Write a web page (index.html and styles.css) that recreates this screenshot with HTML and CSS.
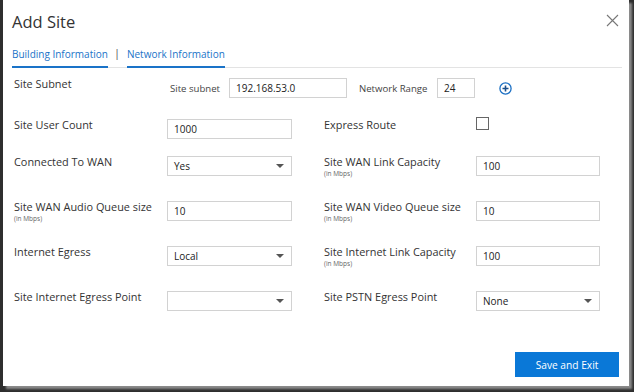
FILE: index.html
```html
<!DOCTYPE html>
<html lang="en">
<head>
    <meta charset="UTF-8">
    <title>Add Site</title>
    <link rel="stylesheet" href="styles.css">
</head>
<body>
    <div class="dialog">
        <div class="dialog-head">
            <h1>Add Site</h1>
            <span class="close">
                <svg width="13" height="13" viewBox="0 0 13 13"><path d="M1 1 L12 12 M12 1 L1 12" stroke="#777" stroke-width="1.1" fill="none"/></svg>
            </span>
        </div>

        <div class="tabs">
            <span class="tab active">Building Information</span>
            <span class="tab-sep">|</span>
            <span class="tab active">Network Information</span>
        </div>

        <div class="form">
            <div class="subnet-row">
                <div class="label">Site Subnet</div>
                <span class="small-label subnet-label">Site subnet</span>
                <input class="field subnet" type="text" value="192.168.53.0">
                <span class="small-label range-label">Network Range</span>
                <input class="field range" type="text" value="24">
                <span class="add">
                    <svg width="13" height="13" viewBox="0 0 13 13"><circle cx="6.5" cy="6.5" r="5.6" stroke="#1a6fc4" stroke-width="1.3" fill="none"/><path d="M6.5 3.5 V9.5 M3.5 6.5 H9.5" stroke="#1a4f8c" stroke-width="1.6"/></svg>
                </span>
            </div>

            <div class="row first">
                <div class="label">Site User Count</div>
                <input class="field" type="text" value="1000">
                <div class="label">Express Route</div>
                <div><span class="checkbox"></span></div>
            </div>

            <div class="row">
                <div class="label">Connected To WAN</div>
                <div class="select"><span>Yes</span><i class="arrow"></i></div>
                <div class="label">Site WAN Link Capacity<small>(in Mbps)</small></div>
                <input class="field" type="text" value="100">
            </div>

            <div class="row">
                <div class="label">Site WAN Audio Queue size<small>(in Mbps)</small></div>
                <input class="field" type="text" value="10">
                <div class="label">Site WAN Video Queue size<small>(in Mbps)</small></div>
                <input class="field" type="text" value="10">
            </div>

            <div class="row">
                <div class="label">Internet Egress</div>
                <div class="select"><span>Local</span><i class="arrow"></i></div>
                <div class="label">Site Internet Link Capacity<small>(in Mbps)</small></div>
                <input class="field" type="text" value="100">
            </div>

            <div class="row">
                <div class="label">Site Internet Egress Point</div>
                <div class="select"><span></span><i class="arrow"></i></div>
                <div class="label">Site PSTN Egress Point</div>
                <div class="select"><span>None</span><i class="arrow"></i></div>
            </div>
        </div>

        <div class="footer">
            <button class="save">Save and Exit</button>
        </div>
    </div>
</body>
</html>
```

FILE: styles.css
```css
body {
    margin: 0;
    font-family: "Open Sans", "Noto Sans", Arial, sans-serif;
    background-color: #2e2e2e;
    height: 392px;
    overflow: hidden;
}

.dialog {
    margin-left: 3px;
    width: 626px;
    height: 386px;
    background-color: #fff;
    box-shadow: 3px 3px 2px #8a8a8a;
    position: relative;
    color: #333;
}

.dialog-head {
    display: flex;
    justify-content: space-between;
    padding: 10px 10px 0 9px;
}

.dialog-head h1 {
    margin: 0;
    font-size: 16.5px;
    font-weight: 400;
    color: #333;
    line-height: 24px;
}

.tabs {
    display: flex;
    align-items: flex-end;
    margin: 11px 7px 0 9px;
    border-bottom: 1px solid #e3e3e3;
}

.tab {
    font-size: 10px;
    color: #1a73c8;
    line-height: 16px;
    padding-bottom: 4px;
}

.tab.active {
    border-bottom: 2px solid #1a73c8;
    margin-bottom: -1px;
}

.tab-sep {
    font-size: 11px;
    color: #555;
    margin: 0 7px 0 6px;
    line-height: 16px;
    padding-bottom: 6px;
}

.form {
    padding: 8px 0 0 11px;
}

.subnet-row {
    display: flex;
    align-items: flex-start;
    height: 41px;
}

.subnet-row .label {
    width: 156px;
}

.small-label {
    font-size: 9.6px;
    color: #444;
    line-height: 15px;
    padding-top: 5px;
}

.subnet-label {
    width: 59px;
}

.subnet {
    width: 118px;
    margin-top: 2px;
}

.range-label {
    margin-left: 12px;
    width: 78px;
}

.range {
    width: 38px;
    margin-top: 4px;
    height: 18px;
}

.add {
    margin: 6px 0 0 24px;
}

.add svg {
    display: block;
}

.row {
    display: grid;
    grid-template-columns: 153px 125px 32px 152px 124px;
    height: 45px;
    align-items: start;
}

.row > :nth-child(3) {
    grid-column: 4;
}

.row.first {
    height: 37px;
}

.label {
    font-size: 10.9px;
    line-height: 15px;
    color: #333;
}

.label small {
    display: block;
    font-size: 6.5px;
    color: #666;
    line-height: 9px;
}

.field,
.select {
    box-sizing: border-box;
    height: 20px;
    border: 1px solid #d2d2d2;
    font-family: inherit;
    font-size: 10px;
    color: #222;
    padding: 0 6px;
    margin: 2px 0 0 0;
    outline: none;
    background: #fff;
}

.select {
    display: flex;
    align-items: center;
    justify-content: space-between;
    padding-right: 7px;
}

.arrow {
    width: 0;
    height: 0;
    border-left: 4px solid transparent;
    border-right: 4px solid transparent;
    border-top: 4px solid #555;
}

.checkbox {
    display: block;
    width: 11px;
    height: 11px;
    border: 1px solid #666;
    margin-top: 0;
}

.footer {
    position: absolute;
    right: 10px;
    bottom: 9px;
}

.save {
    width: 104px;
    height: 25px;
    background-color: #0a78d7;
    color: #fff;
    border: none;
    font-family: inherit;
    font-size: 10.2px;
    cursor: pointer;
}
```
